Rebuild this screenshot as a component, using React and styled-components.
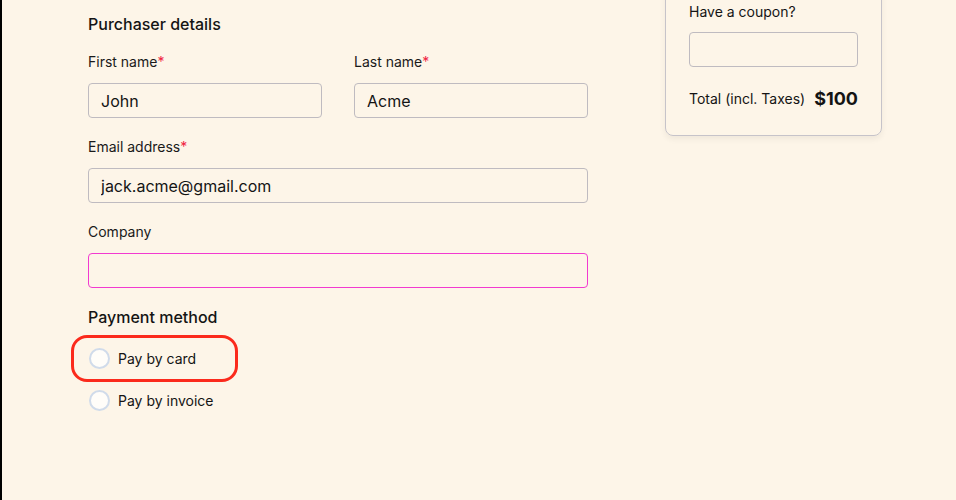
import React, { useState } from 'react';
import styled, { createGlobalStyle } from 'styled-components';

const Global = createGlobalStyle`
    html, body {
        margin: 0;
        padding: 0;
        background: #fdf5e8;
    }
    body {
        font-family: Inter, "Noto Sans", sans-serif;
        color: #141414;
    }
`

const Page = styled.div`
    display: flex;
    align-items: flex-start;
    min-height: 500px;
    border-left: 2px solid #000;
    overflow: hidden;
`

const Main = styled.form`
    width: 500px;
    margin-left: 86px;
    padding-top: 14px;
    display: flex;
    flex-direction: column;
`

const Heading = styled.h2`
    margin: 0 0 ${p => p.$gap || 18}px;
    font-size: 16px;
    line-height: 20px;
    font-weight: 500;
`

const Row = styled.div`
    display: grid;
    grid-template-columns: 1fr 1fr;
    column-gap: 32px;
`

const Field = styled.label`
    display: flex;
    flex-direction: column;
    gap: 11px;
    margin-bottom: 19px;
`

const Label = styled.span`
    font-size: 14px;
    line-height: 20px;
    color: #1a1a1a;
`

const Star = styled.span`
    color: #f0243f;
`

const Input = styled.input`
    box-sizing: border-box;
    width: 100%;
    height: 35px;
    padding: 0 12px;
    border: 1px solid ${p => p.$focus ? '#f23ad0' : '#bfbbc0'};
    border-radius: 4px;
    background: transparent;
    font-family: inherit;
    font-size: 16px;
    color: #141414;
    outline: none;
`

const Options = styled.div`
    display: flex;
    flex-direction: column;
    gap: 21px;
    margin-top: 3px;
`

const Option = styled.label`
    position: relative;
    display: flex;
    align-items: center;
    gap: 8px;
    font-size: 14px;
    line-height: 21px;
    cursor: pointer;
`

const Radio = styled.span`
    box-sizing: border-box;
    width: 21px;
    height: 21px;
    margin-left: 1px;
    border-radius: 50%;
    border: 2px solid #d0dbea;
    background: #fffdf9;
    flex-shrink: 0;
    ${p => p.$checked && 'box-shadow: inset 0 0 0 4px #fffdf9; background: #2b2b2b;'}
`

const Highlight = styled.span`
    position: absolute;
    left: -17px;
    top: -13px;
    width: 167px;
    height: 47px;
    box-sizing: border-box;
    border: 3px solid #fb2a1c;
    border-radius: 16px;
    pointer-events: none;
`

const Aside = styled.aside`
    margin-left: 77px;
`

const Card = styled.div`
    box-sizing: border-box;
    width: 217px;
    margin-top: -22px;
    padding: 23px 23px 24px;
    border: 1px solid #c6c3c9;
    border-radius: 8px;
    box-shadow: 0 3px 6px rgba(0, 0, 0, 0.06);
    display: flex;
    flex-direction: column;
`

const CouponLabel = styled.span`
    font-size: 14px;
    line-height: 20px;
    margin-bottom: 10px;
`

const Total = styled.div`
    display: flex;
    align-items: center;
    justify-content: space-between;
    margin-top: 20px;
    line-height: 24px;
`

const TotalLabel = styled.span`
    font-size: 14px;
`

const Price = styled.span`
    font-size: 18px;
    font-weight: 700;
`

const App = () => {
    const [method, setMethod] = useState(null);

    return (
        <>
            <Global />
            <Page>
                <Main onSubmit={e => e.preventDefault()}>
                    <Heading>Purchaser details</Heading>
                    <Row>
                        <Field>
                            <Label>First name<Star>*</Star></Label>
                            <Input defaultValue="John" />
                        </Field>
                        <Field>
                            <Label>Last name<Star>*</Star></Label>
                            <Input defaultValue="Acme" />
                        </Field>
                    </Row>
                    <Field>
                        <Label>Email address<Star>*</Star></Label>
                        <Input defaultValue="jack.acme@gmail.com" />
                    </Field>
                    <Field>
                        <Label>Company</Label>
                        <Input $focus />
                    </Field>
                    <Heading $gap={0}>Payment method</Heading>
                    <Options>
                        <Option onClick={() => setMethod('card')}>
                            <Radio $checked={method === 'card'} />
                            Pay by card
                            <Highlight />
                        </Option>
                        <Option onClick={() => setMethod('invoice')}>
                            <Radio $checked={method === 'invoice'} />
                            Pay by invoice
                        </Option>
                    </Options>
                </Main>
                <Aside>
                    <Card>
                        <CouponLabel>Have a coupon?</CouponLabel>
                        <Input />
                        <Total>
                            <TotalLabel>Total (incl. Taxes)</TotalLabel>
                            <Price>$100</Price>
                        </Total>
                    </Card>
                </Aside>
            </Page>
        </>
    );
};

export default App;
